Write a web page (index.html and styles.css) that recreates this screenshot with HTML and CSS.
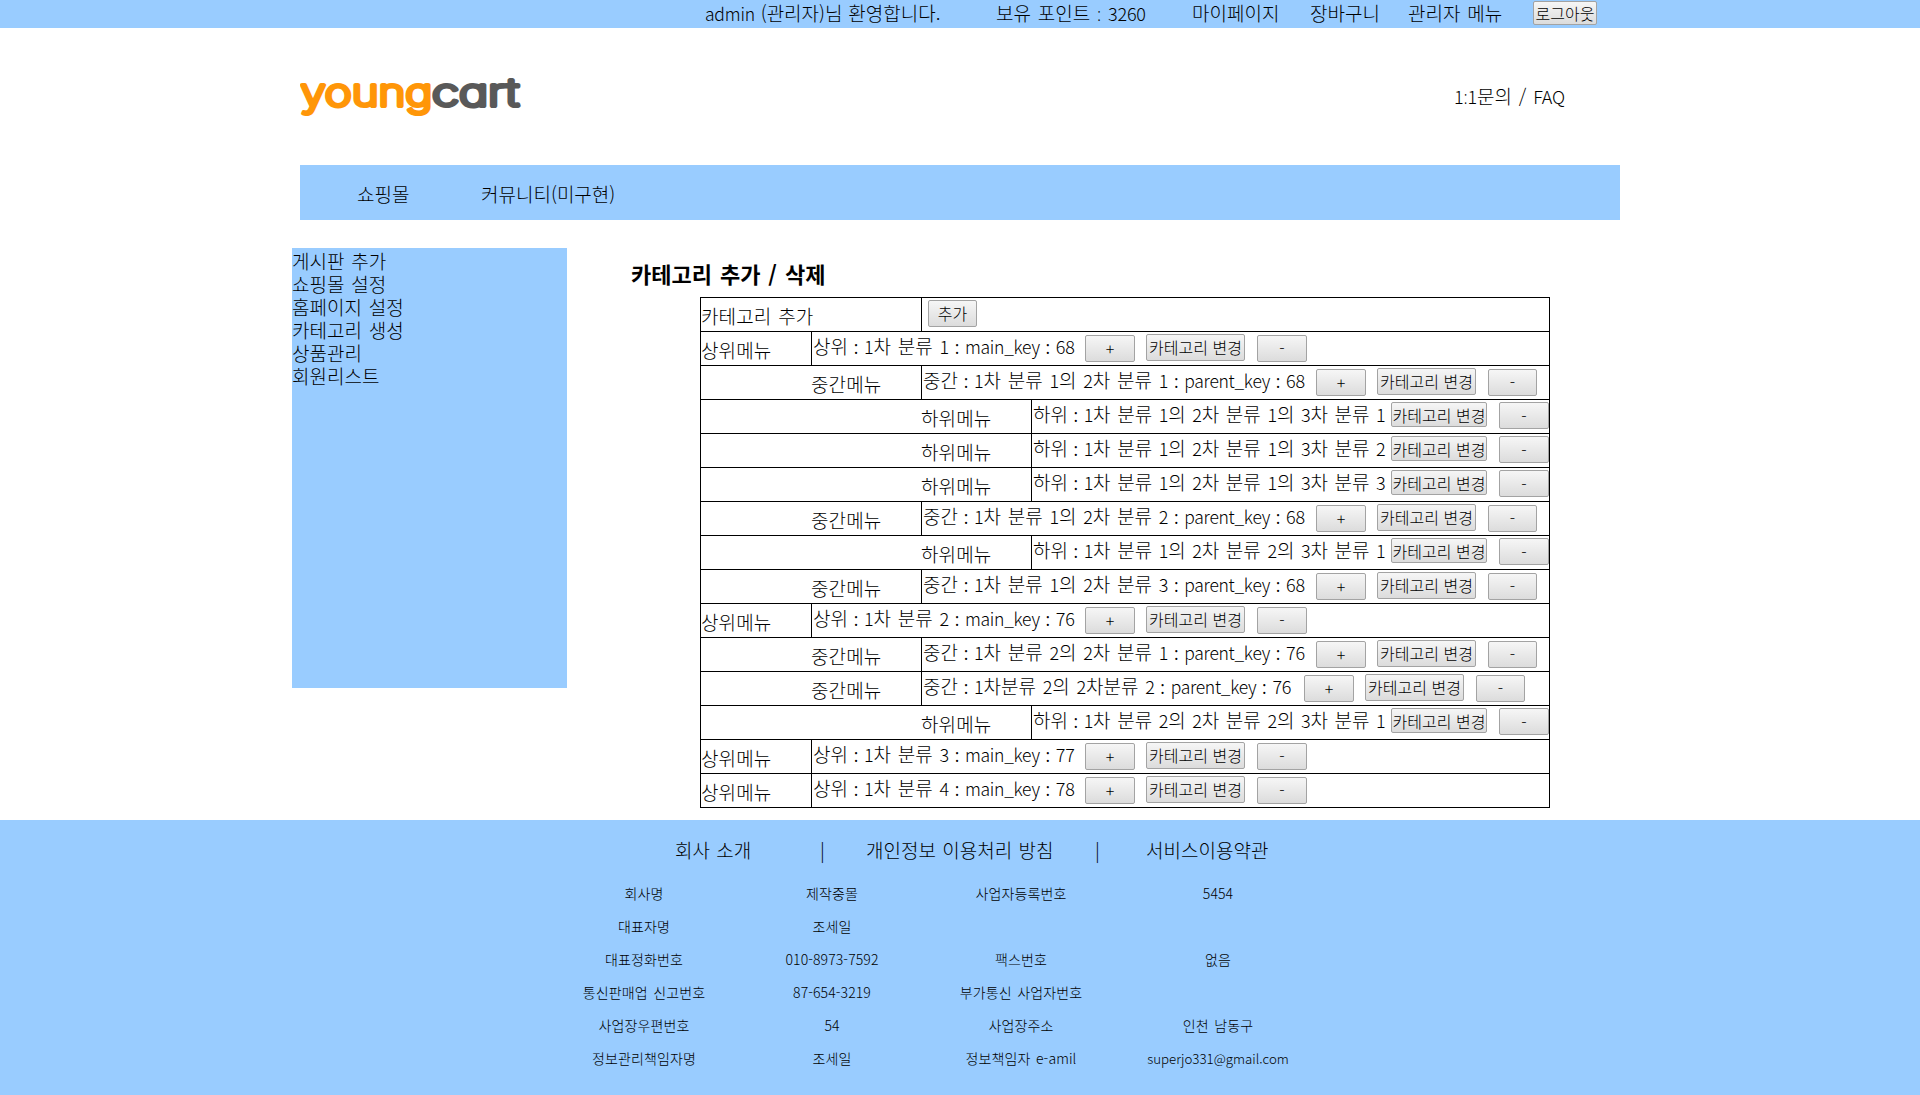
FILE: index.html
```
<!DOCTYPE html>
<html lang="ko">
<head>
<meta charset="utf-8">
<title>youngcart</title>
<link rel="stylesheet" href="styles.css">
</head>
<body>
<div class="topbar">
  <span class="welcome"><span class="lat">admin</span> (관리자)님 환영합니다.</span>
  <span class="points">보유 포인트 <span class="colon">:</span> <span class="num">3260</span></span>
  <a class="mypage">마이페이지</a>
  <a class="basket">장바구니</a>
  <a class="admin">관리자 메뉴</a>
  <button class="btn logout">로그아웃</button>
</div>
<header class="header">
  <svg class="logo" width="232" height="60" viewBox="0 0 232 60">
    <text class="logo-young" x="0.5" y="38.5" textLength="132" lengthAdjust="spacingAndGlyphs">young</text>
    <text class="logo-cart" x="132" y="38.5" textLength="87" lengthAdjust="spacingAndGlyphs">cart</text>
  </svg>
  <span class="help"><span class="num">1<span class="colon">:</span>1</span>문의 / <span class="num">FAQ</span></span>
</header>
<nav class="nav"><a class="shop">쇼핑몰</a><a>커뮤니티(미구현)</a></nav>
<main class="main">
  <aside class="side">
    <a>게시판 추가</a><a>쇼핑몰 설정</a><a>홈페이지 설정</a><a>카테고리 생성</a><a>상품관리</a><a>회원리스트</a>
  </aside>
  <section class="content">
    <h1>카테고리 추가 / 삭제</h1>
    <div class="tree" id="tree">
      <div class="row add"><div class="label">카테고리 추가</div><div class="cell"><button class="btn small">추가</button></div></div>
    </div>
  </section>
</main>
<footer class="footer">
  <div class="links"><a class="about">회사 소개</a><span class="bar1">|</span><a class="privacy">개인정보 이용처리 방침</a><span class="bar2">|</span><a>서비스이용약관</a></div>
  <div class="info">
    <span>회사명</span><span>제작중몰</span><span>사업자등록번호</span><span>5454</span>
    <span>대표자명</span><span>조세일</span><span></span><span></span>
    <span>대표정화번호</span><span>010-8973-7592</span><span>팩스번호</span><span>없음</span>
    <span>통신판매업 신고번호</span><span>87-654-3219</span><span>부가통신 사업자번호</span><span></span>
    <span>사업장우편번호</span><span>54</span><span>사업장주소</span><span>인천 남동구</span>
    <span>정보관리책임자명</span><span>조세일</span><span>정보책임자 e-amil</span><span class="mail">superjo331@gmail.com</span>
  </div>
</footer>
<script src="tree.js"></script>
</body>
</html>
```
FILE: tree.js
```
const labels = { top: '상위메뉴', mid: '중간메뉴', low: '하위메뉴' };
const rows = [
  ['top', '상위 : 1차 분류 1 : main_key : 68'],
  ['mid', '중간 : 1차 분류 1의 2차 분류 1 : parent_key : 68'],
  ['low', '하위 : 1차 분류 1의 2차 분류 1의 3차 분류 1'],
  ['low', '하위 : 1차 분류 1의 2차 분류 1의 3차 분류 2'],
  ['low', '하위 : 1차 분류 1의 2차 분류 1의 3차 분류 3'],
  ['mid', '중간 : 1차 분류 1의 2차 분류 2 : parent_key : 68'],
  ['low', '하위 : 1차 분류 1의 2차 분류 2의 3차 분류 1'],
  ['mid', '중간 : 1차 분류 1의 2차 분류 3 : parent_key : 68'],
  ['top', '상위 : 1차 분류 2 : main_key : 76'],
  ['mid', '중간 : 1차 분류 2의 2차 분류 1 : parent_key : 76'],
  ['mid tight', '중간 : 1차분류 2의 2차분류 2 : parent_key : 76'],
  ['low', '하위 : 1차 분류 2의 2차 분류 2의 3차 분류 1'],
  ['top', '상위 : 1차 분류 3 : main_key : 77'],
  ['top', '상위 : 1차 분류 4 : main_key : 78']
];
const tree = document.getElementById('tree');
for (const [kind, text] of rows) {
  const level = kind.split(' ')[0];
  const name = text.replace(/[a-z_]+|[0-9]+|:/g, m => {
    const style = m === ':' ? 'colon' : /[0-9]/.test(m) ? 'num' : 'lat';
    return `<span class="${style}">${m}</span>`;
  });
  const plus = level === 'low' ? '' : '<button class="btn small">+</button>';
  tree.insertAdjacentHTML('beforeend',
    `<div class="row ${kind}"><div class="label">${labels[level]}</div><div class="cell"><span class="name">${name}</span>${plus}<button class="btn change">카테고리 변경</button><button class="btn small">-</button></div></div>`);
}
```
FILE: styles.css
```
* { box-sizing: border-box; }
body {
  margin: 0;
  background: #fff;
  color: #000;
  font: 300 19px/23px "Noto Sans CJK KR", sans-serif;
  white-space: nowrap;
  word-spacing: 1.5px;
}
.lat { font-size: 17.5px; letter-spacing: -0.2px; line-height: 1; }
.num { font-size: 18px; letter-spacing: -0.2px; line-height: 1; }
.colon { font: 300 17.5px/1 "Open Sans", sans-serif; letter-spacing: 0; }
.name .colon { font-weight: 400; margin: 0 -1.1px; }
.name .lat { letter-spacing: -0.3px; }
.btn {
  font: 300 16px/20px "Noto Sans CJK KR", sans-serif;
  color: #000;
  padding: 0 0 1px;
  border: 1px solid #a3a3a3;
  border-radius: 2px;
  background: linear-gradient(#f6f6f6, #dcdcdc);
  flex: none;
  white-space: nowrap;
}
.topbar {
  height: 28px;
  padding-left: 705px;
  background: #9cf;
  display: flex;
  align-items: flex-start;
  line-height: 25px;
}
.topbar > * { flex: none; }
.welcome { width: 291px; word-spacing: 0.5px; }
.points { width: 196px; }
.mypage { width: 118px; }
.basket { width: 98px; }
.admin { width: 125px; }
.logout { width: 64px; height: 24px; margin-top: 1px; }
.header {
  width: 1320px;
  height: 137px;
  margin: 0 auto;
  display: flex;
  justify-content: space-between;
  padding: 39px 0 0;
}
.logo-young, .logo-cart {
  font: 200 38px Inter, sans-serif;
  font-feature-settings: "cv11";
  word-spacing: 0;
  stroke-width: 4px;
  stroke-linejoin: round;
}
.logo-young { fill: #ff9608; stroke: #ff9608; }
.logo-cart { fill: #595959; stroke: #595959; }
.help { width: 166px; margin-top: 17px; }
.nav {
  width: 1320px;
  height: 55px;
  margin: 0 auto;
  padding-left: 57px;
  display: flex;
  background: #9cf;
  line-height: 57px;
}
.shop { width: 124px; }
.main {
  height: 600px;
  padding: 28px 0 0 292px;
  display: flex;
}
.side {
  width: 275px;
  height: 440px;
  padding-top: 1px;
  background: #9cf;
  display: flex;
  flex-direction: column;
}
.content { margin-left: 64px; }
h1 {
  margin: 0 0 9px;
  padding-top: 5px;
  height: 40px;
  font-size: 22px;
  line-height: 40px;
  font-weight: 700;
  word-spacing: 1.8px;
}
.tree {
  width: 850px;
  margin-left: 69px;
  border: 1px solid #000;
}
.row { height: 34px; display: flex; border-bottom: 1px solid #000; }
.row:last-child { height: 33px; border-bottom: 0; }
.label { flex: none; width: 110px; padding-top: 6px; letter-spacing: 0.1px; }
.cell { flex: 1; padding-left: 1px; border-left: 1px solid #000; display: flex; }
.add .label { width: 220px; }
.mid .label { width: 220px; padding-left: 110px; }
.low .label { width: 330px; padding-left: 220px; }
.name { flex: none; padding-top: 2px; width: 272px; }
.mid .name { width: 393px; }
.mid.tight .name { width: 381px; }
.low .name { width: 358px; word-spacing: 1.3px; }
.small { width: 50px; height: 27px; margin-top: 3px; }
.mid .small:last-child { width: 49px; }
.add .small { margin: 2px 0 0 5px; width: 49px; }
.change { width: 99px; height: 27px; margin: 2px 12px 0 11px; }
.low .change { width: 96px; height: 25px; margin-left: 0; padding: 0; }
.low .small, .low .small:last-child { margin-top: 2px; padding: 0; }
.footer { height: 275px; padding-top: 18px; background: #9cf; }
.links { display: flex; padding-left: 675px; word-spacing: 1px; }
.about { width: 145px; }
.bar1 { width: 46px; }
.privacy { width: 229px; }
.bar2 { width: 51px; }
.info {
  margin: 16px 0 0 560px;
  display: grid;
  grid-template-columns: 168px 208px 170px 224px;
  grid-auto-rows: 33px;
  text-align: center;
  font-size: 14px;
  line-height: 33px;
  letter-spacing: 0.1px;
}
.mail { font-size: 13.3px; letter-spacing: 0; }
```
